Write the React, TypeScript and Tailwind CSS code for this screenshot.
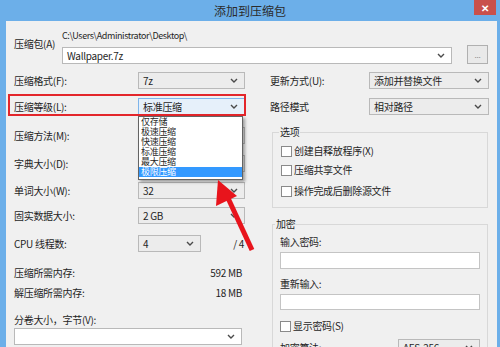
import React from "react";

const Chevron = () => (
  <svg width="8" height="5" viewBox="0 0 8 5" className="shrink-0">
    <path d="M1 1L4 4L7 1" fill="none" stroke="#4a4a4a" strokeWidth="1.4" />
  </svg>
);

type SelectProps = { value: string; className: string };

const Select = ({ value, className }: SelectProps) => (
  <div
    className={`h-[17px] border flex items-center justify-between pl-[4px] pr-[6px] leading-[12px] ${className}`}
  >
    <span>{value}</span>
    <Chevron />
  </div>
);

const Checkbox = ({ label, className }: { label: string; className: string }) => (
  <div className={`flex items-center h-[12px] leading-[12px] ${className}`}>
    <span className="w-[11px] h-[11px] border border-[#8a8a8a] bg-white mr-[2px]" />
    <span>{label}</span>
  </div>
);

// values of the rows hidden under the open list are left blank
const leftRows = [
  { label: "压缩格式(F):", value: "7z", mt: "mt-0", sel: "w-[107px] bg-[#ececec] border-[#b9b9b9]" },
  { label: "压缩等级(L):", value: "标准压缩", mt: "mt-[9px]", sel: "w-[107px] bg-[#e6f0fa] border-[#7eb4ea]" },
  { label: "压缩方法(M):", value: "", mt: "mt-[12px]", sel: "w-[107px] bg-[#ececec] border-[#b9b9b9]" },
  { label: "字典大小(D):", value: "", mt: "mt-[11px]", sel: "w-[107px] bg-[#ececec] border-[#b9b9b9]" },
  { label: "单词大小(W):", value: "32", mt: "mt-[10px]", sel: "w-[107px] bg-[#ececec] border-[#b9b9b9]" },
  { label: "固实数据大小:", value: "2 GB", mt: "mt-[8px]", sel: "w-[107px] bg-[#ececec] border-[#b9b9b9]" },
];

const levels = ["仅存储", "极速压缩", "快速压缩", "标准压缩", "最大压缩", "极限压缩"];

export default function App() {
  return (
    <div className="relative w-[500px] h-[347px] overflow-hidden flex flex-col bg-[#6cafe9] font-['Noto_Sans_CJK_SC','Noto_Sans',sans-serif] text-[10px] tracking-[-0.3px] text-[#1f1f1f]">
      {/* title bar */}
      <div className="h-[21px] shrink-0 grid grid-cols-[1fr_auto_1fr] items-start">
        <div />
        <div className="text-[12px] leading-[21px] tracking-normal text-[#2b2b2b]">添加到压缩包</div>
        <div className="flex justify-end pr-[4px]">
          <div className="w-[22px] h-[15px] bg-[#c9504b] flex items-center justify-center text-white text-[10px] leading-none font-bold">
            ✕
          </div>
        </div>
      </div>

      {/* body */}
      <div className="flex-1 bg-[#f0f0f0] ml-[6px] mr-[3px] pl-[8px] pt-[9px]">
        {/* archive */}
        <div className="flex">
          <span className="w-[48px] mt-[8px] leading-[12px]">压缩包(A)</span>
          <div className="flex flex-col">
            <span className="h-[12px] leading-[12px] text-[9px] tracking-[-0.4px]">
              {"C:\\Users\\Administrator\\Desktop\\"}
            </span>
            <div className="flex items-end mt-[3px]">
              <div className="w-[390px] h-[17px] bg-white border border-[#b9b9b9] flex items-center justify-between pl-[4px] pr-[6px] leading-[12px]">
                <span>Wallpaper.7z</span>
                <Chevron />
              </div>
              <div className="ml-[15px] w-[21px] h-[19px] border border-[#b0b0b0] bg-[#e9e9e9] flex items-center justify-center text-[8px] text-[#888] leading-none">
                ...
              </div>
            </div>
          </div>
        </div>

        {/* columns */}
        <div className="flex mt-[8px]">
          <div className="w-[232px] flex flex-col">
            {leftRows.map((r) => (
              <div key={r.label} className={`flex items-center h-[17px] ${r.mt}`}>
                <span className="w-[124px] leading-[12px]">{r.label}</span>
                <Select value={r.value} className={r.sel} />
              </div>
            ))}
            <div className="flex items-center h-[17px] mt-[11px]">
              <span className="w-[124px] leading-[12px]">CPU 线程数:</span>
              <Select value="4" className="w-[63px] bg-[#ececec] border-[#b9b9b9]" />
              <span className="ml-auto pr-[2px] leading-[12px]">/ 4</span>
            </div>
            <div className="flex justify-between leading-[12px] mt-[15px] pr-[4px]">
              <span>压缩所需内存:</span>
              <span>592 MB</span>
            </div>
            <div className="flex justify-between leading-[12px] mt-[8px] pr-[4px]">
              <span>解压缩所需内存:</span>
              <span>18 MB</span>
            </div>
            <span className="leading-[12px] mt-[15px]">分卷大小，字节(V):</span>
            <Select value="" className="mt-[2px] w-[228px] bg-white border-[#b9b9b9]" />
          </div>

          <div className="ml-[24px] w-[219px] flex flex-col">
            <div className="flex items-center h-[17px]">
              <span className="w-[99px] leading-[12px]">更新方式(U):</span>
              <Select value="添加并替换文件" className="w-[120px] bg-[#ececec] border-[#b9b9b9]" />
            </div>
            <div className="flex items-center h-[17px] mt-[9px]">
              <span className="w-[99px] leading-[12px]">路径模式</span>
              <Select value="相对路径" className="w-[120px] bg-[#ececec] border-[#b9b9b9]" />
            </div>

            <fieldset className="mt-[11px] ml-[2px] w-[216px] border border-[#d8d8d8] pl-[6px] pb-[10px]">
              <legend className="leading-[12px] px-[1px]">选项</legend>
              <Checkbox label="创建自释放程序(X)" className="mt-[7px] ml-[2px]" />
              <Checkbox label="压缩共享文件" className="mt-[7px] ml-[2px]" />
              <Checkbox label="操作完成后删除源文件" className="mt-[9px] ml-[2px]" />
            </fieldset>

            <fieldset className="mt-[10px] ml-[2px] w-[216px] border border-[#d8d8d8] pl-[2px] pr-[7px] pb-[10px]">
              <legend className="leading-[12px] px-[1px]">加密</legend>
              <div className="pl-[5px] flex flex-col">
                <span className="leading-[12px] mt-[6px]">输入密码:</span>
                <div className="mt-[4px] h-[17px] bg-white border border-[#c4c4c4]" />
                <span className="leading-[12px] mt-[9px]">重新输入:</span>
                <div className="mt-[4px] h-[16px] bg-white border border-[#c4c4c4]" />
                <Checkbox label="显示密码(S)" className="mt-[10px]" />
                <div className="flex items-center justify-between mt-[7px]">
                  <span className="leading-[12px]">加密算法:</span>
                  <Select value="AES-256" className="w-[82px] bg-[#ececec] border-[#b9b9b9]" />
                </div>
              </div>
            </fieldset>
          </div>
        </div>
      </div>

      {/* annotation box */}
      <div className="absolute left-[8px] top-[94px] w-[238px] h-[22px] border-2 border-[#e3262b]" />

      {/* open level list */}
      <div className="absolute left-[138px] top-[116px] w-[105px] bg-white border border-[#646464] pb-[2px] shadow-[2px_2px_3px_rgba(0,0,0,0.35)] text-[9px]">
        {levels.map((l, i) => (
          <div
            key={l}
            className={`h-[10px] leading-[10px] pl-[2px] ${i === 5 ? "bg-[#3399ff] text-white" : ""}`}
          >
            {l}
          </div>
        ))}
      </div>

      {/* red arrow */}
      <svg className="absolute inset-0 pointer-events-none" width="500" height="347" viewBox="0 0 500 347">
        <line x1="252" y1="250" x2="228" y2="198" stroke="#e8141c" strokeWidth="5" />
        <polygon points="218,180 237,196 216,206" fill="#e8141c" />
      </svg>
    </div>
  );
}
